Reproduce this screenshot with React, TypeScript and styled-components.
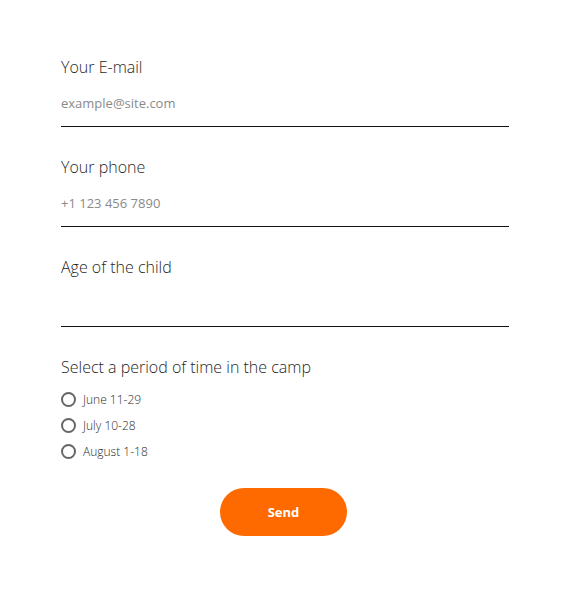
import React from "react";
import styled, { createGlobalStyle } from "styled-components";

const Global = createGlobalStyle`
  html, body { margin: 0; padding: 0; background: #fff; }
  body { font-family: "Open Sans", "Liberation Sans", sans-serif; }
  * { box-sizing: border-box; }
`;

const Form = styled.form`
  width: 570px;
  padding: 56px 61px 56px 61px;
  display: flex;
  flex-direction: column;
`;

const Field = styled.div`
  display: flex;
  flex-direction: column;
  margin-bottom: 29px;
`;

const Label = styled.label`
  font-size: 16px;
  font-weight: 300;
  line-height: 22px;
  color: #1f1f1f;
`;

const Input = styled.input`
  height: 49px;
  border: none;
  border-bottom: 1px solid #111;
  padding: 2px 0 0 0;
  font-family: "Open Sans", "Liberation Sans", sans-serif;
  font-size: 13px;
  font-weight: 400;
  color: #222;
  outline: none;
  background: transparent;
  &::placeholder { color: #8a8a8a; }
`;

const RadioList = styled.div`
  display: flex;
  flex-direction: column;
  margin-top: 8px;
`;

const RadioRow = styled.label`
  display: flex;
  align-items: center;
  gap: 7px;
  height: 26px;
  font-size: 12px;
  font-weight: 300;
  color: #2a2a2a;
  cursor: pointer;
`;

const RadioCircle = styled.span`
  width: 15px;
  height: 15px;
  border-radius: 50%;
  border: 2px solid #666;
  flex: none;
`;

const Actions = styled.div`
  display: flex;
  justify-content: center;
  margin-top: 24px;
`;

const SendButton = styled.button`
  width: 127px;
  height: 48px;
  border: none;
  border-radius: 24px;
  background: #ff6a00;
  color: #fff;
  font-family: "Open Sans", "Liberation Sans", sans-serif;
  font-size: 13px;
  font-weight: 700;
  cursor: pointer;
  margin-right: 3px;
`;

const periods = ["June 11-29", "July 10-28", "August 1-18"];

export default function App() {
  return (
    <>
      <Global />
      <Form onSubmit={(e) => e.preventDefault()}>
        <Field>
          <Label>Your E-mail</Label>
          <Input placeholder="example@site.com" />
        </Field>
        <Field>
          <Label>Your phone</Label>
          <Input placeholder="+1 123 456 7890" />
        </Field>
        <Field>
          <Label>Age of the child</Label>
          <Input />
        </Field>
        <Label>Select a period of time in the camp</Label>
        <RadioList>
          {periods.map((p) => (
            <RadioRow key={p}>
              <RadioCircle />
              {p}
            </RadioRow>
          ))}
        </RadioList>
        <Actions>
          <SendButton type="submit">Send</SendButton>
        </Actions>
      </Form>
    </>
  );
}
